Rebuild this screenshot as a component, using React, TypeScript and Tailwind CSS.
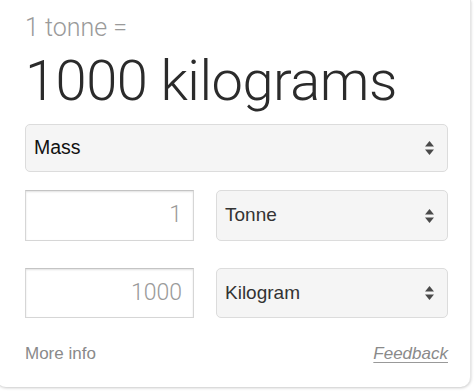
const Arrows = () => (
  <svg width="11" height="16" viewBox="0 0 11 16" aria-hidden>
    <path d="M1 6.5 L5.5 1 L10 6.5 Z" fill="#4a4a4a" />
    <path d="M1 9.5 L5.5 15 L10 9.5 Z" fill="#4a4a4a" />
  </svg>
);

function FakeSelect({ label, className }: { label: string; className?: string }) {
  return (
    <div
      className={`flex items-center justify-between rounded-[5px] border border-[#dcdcdc] bg-[#f5f5f5] pl-[8px] pr-[12px] font-['Liberation_Sans',Arial,sans-serif] ${className ?? ""}`}
    >
      <span>{label}</span>
      <Arrows />
    </div>
  );
}

function NumberBox({ value }: { value: string }) {
  return (
    <div className="flex h-full w-[169px] items-center justify-end border border-[#d6d6d6] border-t-[#c4c4c4] bg-white pr-[11px] text-[23px] font-light text-[#9a9a9a] shadow-[inset_0_1px_2px_rgba(0,0,0,0.12)]">
      {value}
    </div>
  );
}

export default function App() {
  return (
    <div className="h-[391px] w-[474px] overflow-hidden bg-white font-['Roboto','Liberation_Sans',sans-serif]">
      <div className="-ml-[4px] mr-[3px] h-[387px] rounded-b-[10px] border-r border-[#e6e6e6] bg-white pl-[29px] pr-[22px] pt-[12px] shadow-[0_1px_3px_rgba(0,0,0,0.22)]">
        <p className="text-[25px] font-light leading-[31px] text-[#9a9a9a]">1 tonne =</p>
        <p className="mt-[5px] text-[56px] font-light leading-[66px] tracking-[-0.5px] text-[#2b2b2b]">
          1000 kilograms
        </p>
        <FakeSelect label="Mass" className="mt-[10px] h-[48px] text-[19.5px] text-[#111]" />
        <div className="mt-[18px] flex h-[51px] gap-[22px]">
          <NumberBox value="1" />
          <FakeSelect label="Tonne" className="flex-1 text-[19px] text-[#333]" />
        </div>
        <div className="mt-[27px] flex h-[50px] gap-[22px]">
          <NumberBox value="1000" />
          <FakeSelect label="Kilogram" className="flex-1 text-[19px] text-[#333]" />
        </div>
        <div className="mt-[23px] flex items-center justify-between font-['Liberation_Sans',Arial,sans-serif] text-[17px] text-[#8a8a8a]">
          <span>More info</span>
          <span className="italic underline decoration-[#999] underline-offset-[3px]">Feedback</span>
        </div>
      </div>
    </div>
  );
}
